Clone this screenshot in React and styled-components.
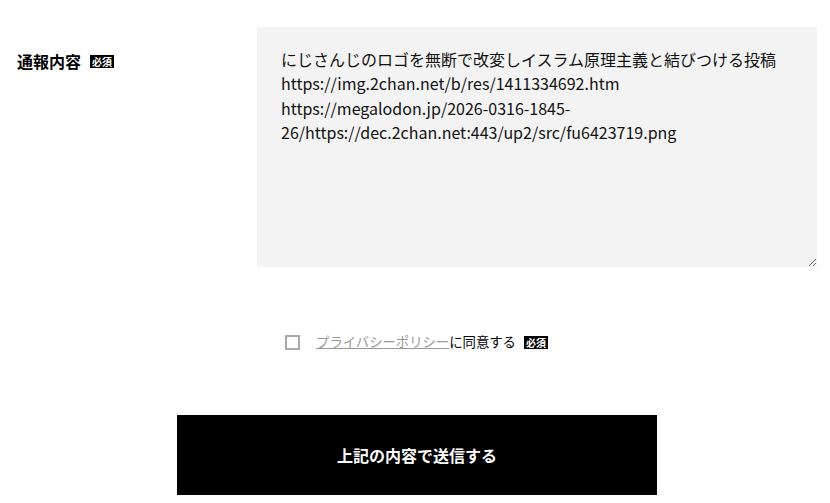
import React from 'react';
import styled, { createGlobalStyle } from 'styled-components';

const Global = createGlobalStyle`
  body {
    margin: 0;
    background: #fff;
    font-family: "Noto Sans CJK JP", "Noto Sans", sans-serif;
    color: #000;
  }
`;

const Page = styled.div`
  width: 830px;
  padding-top: 27px;
`;

const FieldRow = styled.div`
  display: flex;
  align-items: flex-start;
`;

const Label = styled.div`
  width: 240px;
  padding-left: 17px;
  padding-top: 22px;
  display: flex;
  align-items: center;
  gap: 9px;
  font-size: 16px;
  font-weight: 700;
  line-height: 24px;
`;

const Badge = styled.span`
  display: inline-block;
  background: #000;
  color: #fff;
  font-size: 10px;
  font-weight: 700;
  line-height: 13px;
  padding: 0 2px;
  margin-left: ${p => p.$gap || 0}px;
`;

const TextArea = styled.textarea`
  width: 560px;
  height: 240px;
  box-sizing: border-box;
  border: none;
  outline: none;
  background: #f3f3f3;
  padding: 20px 24px;
  font-family: "Noto Sans CJK JP", "Noto Sans", sans-serif;
  font-size: 16px;
  line-height: 24.3px;
  color: #111;
  margin: 0;
  display: block;
`;

const Agree = styled.label`
  margin-top: 64px;
  display: flex;
  justify-content: center;
  align-items: center;
  font-size: 13.35px;
  line-height: 22px;
  padding-left: 3px;
`;

const Box = styled.span`
  width: 15px;
  height: 15px;
  box-sizing: border-box;
  border: 2px solid #aaa;
  margin-right: 16px;
`;

const Policy = styled.a`
  color: #999;
  text-decoration: underline;
`;

const Submit = styled.button`
  display: block;
  margin: 62px auto 0;
  width: 480px;
  height: 80px;
  background: #000;
  color: #fff;
  border: none;
  font-family: "Noto Sans CJK JP", "Noto Sans", sans-serif;
  font-size: 16px;
  font-weight: 700;
  position: relative;
  left: 2px;
`;

const text = `にじさんじのロゴを無断で改変しイスラム原理主義と結びつける投稿
https://img.2chan.net/b/res/1411334692.htm
https://megalodon.jp/2026-0316-1845-26/https://dec.2chan.net:443/up2/src/fu6423719.png`;

export default function App() {
  return (
    <Page>
      <Global />
      <FieldRow>
        <Label>
          通報内容<Badge>必須</Badge>
        </Label>
        <TextArea defaultValue={text} />
      </FieldRow>
      <Agree>
        <Box />
        <Policy>プライバシーポリシー</Policy>に同意する
        <Badge $gap={8}>必須</Badge>
      </Agree>
      <Submit>上記の内容で送信する</Submit>
    </Page>
  );
}
